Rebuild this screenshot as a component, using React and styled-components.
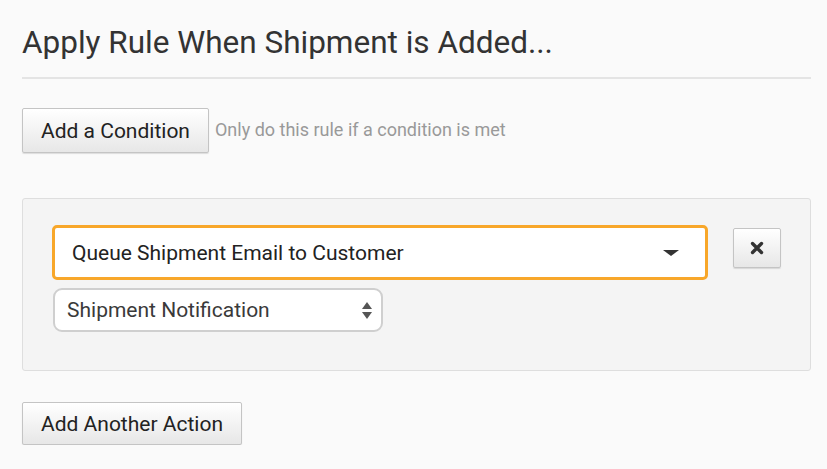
import styled, { createGlobalStyle } from "styled-components";

const GlobalStyle = createGlobalStyle`
    html, body {
        margin: 0;
        padding: 0;
        background: #fafafa;
        font-family: Roboto, "Liberation Sans", sans-serif;
        color: #333;
    }
`;

const Page = styled.div`
    width: 789px;
    padding: 22px 0 0 22px;
`;

const Title = styled.h1`
    margin: 0;
    padding-bottom: 13px;
    font-size: 31.5px;
    font-weight: 400;
    line-height: 42px;
    color: #333;
    border-bottom: 2px solid #e4e4e4;
`;

const ConditionRow = styled.div`
    display: flex;
    align-items: center;
    margin-top: 29px;
`;

const Button = styled.button`
    height: ${(p) => p.$h || 45}px;
    padding: 0 ${(p) => p.$px || 18}px;
    font-family: Roboto, "Liberation Sans", sans-serif;
    font-size: 21px;
    color: #222;
    background: linear-gradient(#ffffff, #e7e7e7);
    border: 1px solid #c4c4c4;
    border-radius: 2px;
    box-shadow: 0 1px 1px rgba(0, 0, 0, 0.12);
    cursor: pointer;
`;

const Hint = styled.span`
    margin-left: 6px;
    margin-bottom: 2px;
    font-size: 18px;
    color: #999;
`;

const Panel = styled.div`
    margin-top: 45px;
    padding: 26px 29px 38px;
    background: #f4f4f4;
    border: 1px solid #dedede;
    border-radius: 3px;
    box-sizing: border-box;
    height: 173px;
`;

const ActionRow = styled.div`
    display: flex;
    align-items: flex-start;
    gap: 25px;
`;

const BigSelect = styled.div`
    width: 658px;
    height: 55px;
    box-sizing: border-box;
    display: flex;
    align-items: center;
    justify-content: space-between;
    padding: 0 26px 0 17px;
    background: #fff;
    border: 3px solid #f8a72a;
    border-radius: 5px;
    font-size: 21px;
    color: #222;
`;

const Caret = styled.span`
    width: 0;
    height: 0;
    border-left: 8px solid transparent;
    border-right: 8px solid transparent;
    border-top: 6px solid #333;
`;

const RemoveButton = styled(Button)`
    width: 48px;
    margin-top: 3px;
    padding: 0;
    display: flex;
    align-items: center;
    justify-content: center;
`;

const SmallSelect = styled.div`
    width: 330px;
    height: 44px;
    margin-top: 8px;
    margin-left: 1px;
    box-sizing: border-box;
    display: flex;
    align-items: center;
    justify-content: space-between;
    padding: 0 9px 0 12px;
    background: #fff;
    border: 2px solid #cfcfcf;
    border-radius: 9px;
    font-size: 21px;
    color: #3a3a3a;
`;

const Arrows = styled.span`
    display: flex;
    flex-direction: column;
    gap: 3px;
`;

const Arrow = styled.span`
    width: 0;
    height: 0;
    border-left: 5px solid transparent;
    border-right: 5px solid transparent;
    ${(p) => (p.$up ? "border-bottom" : "border-top")}: 7px solid #555;
`;

const Footer = styled.div`
    margin-top: 31px;
`;

export default function App() {
    return (
        <>
            <GlobalStyle />
            <Page>
                <Title>Apply Rule When Shipment is Added...</Title>
                <ConditionRow>
                    <Button>Add a Condition</Button>
                    <Hint>Only do this rule if a condition is met</Hint>
                </ConditionRow>
                <Panel>
                    <ActionRow>
                        <BigSelect>
                            <span>Queue Shipment Email to Customer</span>
                            <Caret />
                        </BigSelect>
                        <RemoveButton $h={40} aria-label="Remove">
                            <svg width="14" height="14" viewBox="0 0 14 14">
                                <path
                                    d="M2.5 2.5 L11.5 11.5 M11.5 2.5 L2.5 11.5"
                                    stroke="#333"
                                    strokeWidth="3.4"
                                    strokeLinecap="round"
                                />
                            </svg>
                        </RemoveButton>
                    </ActionRow>
                    <SmallSelect>
                        <span>Shipment Notification</span>
                        <Arrows>
                            <Arrow $up />
                            <Arrow />
                        </Arrows>
                    </SmallSelect>
                </Panel>
                <Footer>
                    <Button $h={43}>Add Another Action</Button>
                </Footer>
            </Page>
        </>
    );
}
